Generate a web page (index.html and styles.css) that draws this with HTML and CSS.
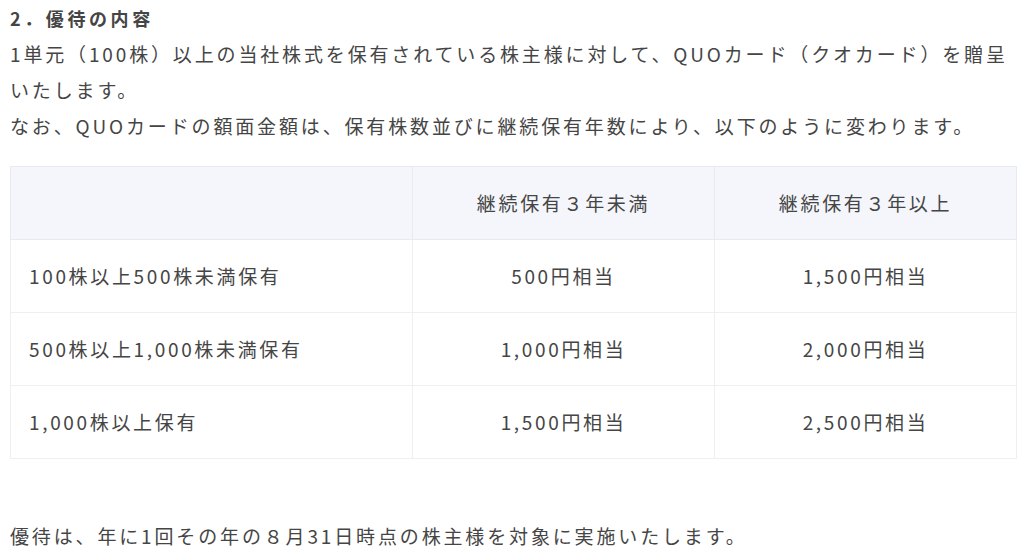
FILE: index.html
```html
<!DOCTYPE html>
<html lang="ja">
<head>
<meta charset="utf-8">
<title>優待の内容</title>
<link rel="stylesheet" href="styles.css">
</head>
<body>
<div class="content">
  <h3 class="heading">2．優待の内容</h3>
  <p class="text">1単元（100株）以上の当社株式を保有されている株主様に対して、QUOカード（クオカード）を贈呈いたします。</p>
  <p class="text">なお、QUOカードの額面金額は、保有株数並びに継続保有年数により、以下のように変わります。</p>
  <table class="benefit">
    <thead>
      <tr>
        <th class="c1"></th>
        <th class="c2">継続保有３年未満</th>
        <th class="c3">継続保有３年以上</th>
      </tr>
    </thead>
    <tbody>
      <tr>
        <td class="label">100株以上500株未満保有</td>
        <td>500円相当</td>
        <td>1,500円相当</td>
      </tr>
      <tr>
        <td class="label">500株以上1,000株未満保有</td>
        <td>1,000円相当</td>
        <td>2,000円相当</td>
      </tr>
      <tr>
        <td class="label">1,000株以上保有</td>
        <td>1,500円相当</td>
        <td>2,500円相当</td>
      </tr>
    </tbody>
  </table>
  <p class="text note">優待は、年に1回その年の８月31日時点の株主様を対象に実施いたします。</p>
</div>
</body>
</html>
```

FILE: styles.css
```css
html, body {
  margin: 0;
  padding: 0;
  background: #ffffff;
}
body {
  font-family: "Noto Sans CJK JP", "Noto Sans", sans-serif;
  color: #454545;
  font-size: 19px;
  line-height: 36px;
  letter-spacing: 0.15em;
}
.content {
  padding: 0 7px 0 10px;
}
.heading {
  margin: 0;
  font-size: 18px;
  font-weight: 700;
  line-height: 36px;
  letter-spacing: 0.2em;
}
.text {
  margin: 0;
}
.benefit {
  width: 100%;
  margin: 22px 0 59px;
  border-collapse: collapse;
  table-layout: fixed;
}
.benefit th,
.benefit td {
  box-sizing: border-box;
  border: 1px solid #eeeff2;
  padding: 18px 18px;
  text-align: center;
  font-weight: 400;
  line-height: 36px;
  letter-spacing: 0.14em;
}
.benefit th {
  background: #f4f6fb;
  border-color: #e7eaf3;
}
.benefit .c1 { width: 402px; }
.benefit .c2 { width: 302px; }
.benefit td.label {
  text-align: left;
}
```
